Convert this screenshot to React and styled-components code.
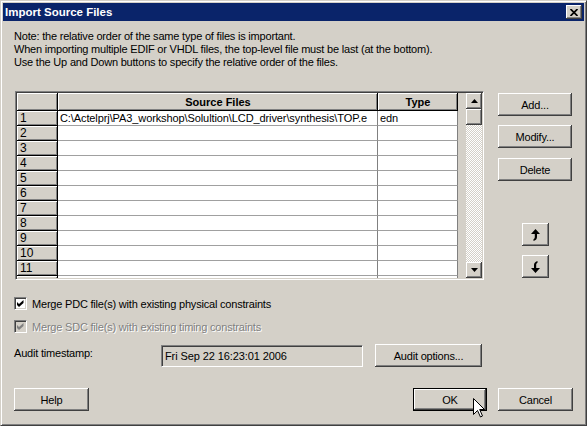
import React from 'react';
import styled, { createGlobalStyle, css } from 'styled-components';

const GlobalStyle = createGlobalStyle`
  html, body {
    margin: 0;
    padding: 0;
    background: #d4d0c8;
  }
  body {
    font-family: "Liberation Sans", Arial, sans-serif;
    font-size: 11px;
    color: #000;
  }
`;

const raised = css`
  background: #d4d0c8;
  box-shadow: inset -1px -1px #404040, inset 1px 1px #fff,
    inset -2px -2px #808080, inset 2px 2px #d4d0c8;
`;

const sunken = css`
  border: 1px solid;
  border-color: #808080 #fff #fff #808080;
  box-shadow: inset 1px 1px #404040, inset -1px -1px #d4d0c8;
  padding: 1px;
  box-sizing: border-box;
`;

// the path is cut by the column edge in the original, row 12 only peeks out
const rows = [
  { n: '1', file: 'C:\\Actelprj\\PA3_workshop\\Solultion\\LCD_driver\\synthesis\\TOP.e', type: 'edn' },
  ...Array.from({ length: 10 }, (_, i) => ({ n: String(i + 2), file: '', type: '' })),
  { n: '', file: '', type: '' },
];

export default function App() {
  return (
    <>
      <GlobalStyle />
      <Window>
        <TitleBar>
          <Title>Import Source Files</Title>
          <CloseButton aria-label="Close">
            <svg width="8" height="7" viewBox="0 0 8 7">
              <path d="M0.5 0 L7.5 7 M7.5 0 L0.5 7" stroke="#000" strokeWidth="1.7" />
            </svg>
          </CloseButton>
        </TitleBar>
        <Body>
          <Note>
            Note: the relative order of the same type of files is important.
            <br />
            When importing multiple EDIF or VHDL files, the top-level file must be last (at the bottom).
            <br />
            Use the Up and Down buttons to specify the relative order of the files.
          </Note>

          <MainRow>
            <GridFrame>
              <Table>
                <HeadCell />
                <HeadCell $center>Source Files</HeadCell>
                <HeadCell $center>Type</HeadCell>
                {rows.map((r, i) => (
                  <React.Fragment key={i}>
                    <RowNum>{r.n}</RowNum>
                    <Cell>{r.file}</Cell>
                    <Cell>{r.type}</Cell>
                  </React.Fragment>
                ))}
              </Table>
              <ScrollBar>
                <ScrollBtn>
                  <svg width="7" height="4" viewBox="0 0 7 4">
                    <path d="M3.5 0 L7 4 L0 4 Z" fill="#000" />
                  </svg>
                </ScrollBtn>
                <Thumb />
                <Track />
                <ScrollBtn>
                  <svg width="7" height="4" viewBox="0 0 7 4">
                    <path d="M0 0 L7 0 L3.5 4 Z" fill="#000" />
                  </svg>
                </ScrollBtn>
              </ScrollBar>
            </GridFrame>

            <SideButtons>
              <Button $w={74}>Add...</Button>
              <Button $w={74} $mt={9}>Modify...</Button>
              <Button $w={74} $mt={10}>Delete</Button>
              <Button $w={27} $mt={42}>
                <ArrowIcon />
              </Button>
              <Button $w={27} $mt={9}>
                <ArrowIcon $down />
              </Button>
            </SideButtons>
          </MainRow>

          <CheckRow $mt={15}>
            <CheckBox>
              <CheckMark color="#000" />
            </CheckBox>
            <CheckLabel>Merge PDC file(s) with existing physical constraints</CheckLabel>
          </CheckRow>
          <CheckRow $mt={6}>
            <CheckBox $disabled>
              <CheckMark color="#808080" />
            </CheckBox>
            <CheckLabel $disabled>Merge SDC file(s) with existing timing constraints</CheckLabel>
          </CheckRow>

          <AuditRow>
            <AuditLabel>Audit timestamp:</AuditLabel>
            <Field>Fri Sep 22 16:23:01 2006</Field>
            <Button $w={107}>Audit options...</Button>
          </AuditRow>

          <Footer>
            <Button $w={75}>Help</Button>
            <Spacer />
            <Button $w={74} $default>OK</Button>
            <Button $w={75}>Cancel</Button>
          </Footer>
        </Body>
        <Cursor width="13" height="20" viewBox="0 0 13 20">
          <path
            d="M0.5 0.5 L0.5 16.5 L4.5 12.5 L7.5 19 L9.5 18 L6.7 11.5 L11.5 11.5 Z"
            fill="#fff"
            stroke="#000"
            strokeWidth="1"
          />
        </Cursor>
      </Window>
    </>
  );
}

function ArrowIcon({ $down }) {
  return (
    <svg
      width="9"
      height="12"
      viewBox="0 0 9 12"
      style={{ transform: $down ? 'rotate(180deg)' : 'none' }}
    >
      <path
        d="M4.5 0 L9 5 L6 5 L6 8 C6 10 5 11 2.5 12 L2.5 10.2 C3.6 9.6 3.8 8.8 3.8 8 L3.8 5 L0 5 Z"
        fill="#000"
      />
    </svg>
  );
}

function CheckMark({ color }) {
  return (
    <svg width="7" height="7" viewBox="0 0 7 7">
      <path d="M0 2 L2 4 L6.5 0 L6.5 3 L2 7 L0 5 Z" fill={color} />
    </svg>
  );
}

const Window = styled.div`
  position: relative;
  width: 587px;
  height: 426px;
  box-sizing: border-box;
  border: 1px solid;
  border-color: #d4d0c8 #404040 #404040 #d4d0c8;
  box-shadow: inset 1px 1px #fff, inset -1px -1px #808080;
  padding: 2px;
  background: #d4d0c8;
  display: flex;
  flex-direction: column;
  overflow: hidden;
`;

const TitleBar = styled.div`
  height: 18px;
  background: #0a246a;
  display: flex;
  align-items: center;
  padding: 0 2px;
`;

const Title = styled.div`
  flex: 1;
  color: #fff;
  font-weight: bold;
  font-size: 11.5px;
`;

const CloseButton = styled.div`
  ${raised};
  width: 16px;
  height: 14px;
  display: flex;
  align-items: center;
  justify-content: center;
`;

const Body = styled.div`
  flex: 1;
  padding: 9px 11px 0 11px;
  display: flex;
  flex-direction: column;
`;

const Note = styled.div`
  line-height: 13px;
  letter-spacing: -0.2px;
`;

const MainRow = styled.div`
  display: flex;
  align-items: flex-start;
  margin-top: 22px;
  margin-left: 1px;
`;

const GridFrame = styled.div`
  ${sunken};
  width: 469px;
  height: 189px;
  display: flex;
  justify-content: space-between;
  overflow: hidden;
`;

const Table = styled.div`
  display: grid;
  grid-template-columns: 41px 320px 80px;
  grid-template-rows: 18px;
  grid-auto-rows: 15px;
  align-content: start;
  overflow: hidden;
`;

const HeadCell = styled.div`
  ${raised};
  box-shadow: inset -1px -1px #000, inset 1px 1px #fff, inset -2px -2px #808080;
  font-weight: bold;
  text-align: ${({ $center }) => ($center ? 'center' : 'left')};
  line-height: 18px;
  white-space: nowrap;
  overflow: hidden;
`;

const RowNum = styled.div`
  ${raised};
  box-shadow: inset -1px -1px #000, inset 1px 1px #fff, inset -2px -2px #808080;
  padding-left: 3px;
  line-height: 15px;
  font-size: 12px;
`;

const Cell = styled.div`
  background: #fff;
  border-right: 1px solid #808080;
  border-bottom: 1px solid #a0a0a0;
  padding-left: 2px;
  line-height: 14px;
  white-space: nowrap;
  overflow: hidden;
  letter-spacing: -0.1px;
`;

const ScrollBar = styled.div`
  width: 16px;
  display: flex;
  flex-direction: column;
`;

const ScrollBtn = styled.div`
  ${raised};
  width: 16px;
  height: 16px;
  display: flex;
  align-items: center;
  justify-content: center;
  flex-shrink: 0;
`;

const Thumb = styled.div`
  ${raised};
  height: 16px;
  flex-shrink: 0;
`;

const Track = styled.div`
  flex: 1;
  background-color: #d4d0c8;
  background-image: conic-gradient(#fff 25%, transparent 0 50%, #fff 0 75%, transparent 0);
  background-size: 2px 2px;
`;

const SideButtons = styled.div`
  display: flex;
  flex-direction: column;
  align-items: center;
  width: 74px;
  margin-left: 14px;
  padding-top: 2px;
`;

const Button = styled.div`
  ${raised};
  width: ${({ $w }) => $w}px;
  height: 23px;
  margin-top: ${({ $mt }) => $mt || 0}px;
  box-sizing: border-box;
  display: flex;
  align-items: center;
  justify-content: center;
  flex-shrink: 0;
  letter-spacing: -0.2px;
  ${({ $default }) =>
    $default &&
    css`
      border: 1px solid #000;
      box-shadow: inset -1px -1px #404040, inset 1px 1px #fff,
        inset -2px -2px #808080;
    `}
`;

const CheckRow = styled.div`
  display: flex;
  align-items: center;
  height: 17px;
  margin-top: ${({ $mt }) => $mt}px;
`;

const CheckBox = styled.div`
  ${sunken};
  width: 13px;
  height: 13px;
  background: ${({ $disabled }) => ($disabled ? '#d4d0c8' : '#fff')};
  display: flex;
  align-items: center;
  justify-content: center;
  padding: 0;
`;

const CheckLabel = styled.span`
  margin-left: 5px;
  letter-spacing: -0.2px;
  color: ${({ $disabled }) => ($disabled ? '#808080' : '#000')};
  text-shadow: ${({ $disabled }) => ($disabled ? '1px 1px 0 #fff' : 'none')};
`;

const AuditRow = styled.div`
  display: flex;
  align-items: center;
  margin-top: 9px;
`;

const AuditLabel = styled.div`
  width: 147px;
  letter-spacing: -0.2px;
  margin-top: -6px;
`;

const Field = styled.div`
  ${sunken};
  width: 202px;
  height: 22px;
  background: #d4d0c8;
  padding-left: 3px;
  display: flex;
  align-items: center;
  letter-spacing: -0.1px;
  margin-right: 12px;
`;

const Footer = styled.div`
  display: flex;
  align-items: center;
  gap: 11px;
  margin-top: 21px;
`;

const Spacer = styled.div`
  flex: 1;
`;

const Cursor = styled.svg`
  position: absolute;
  left: 472px;
  top: 397px;
`;
